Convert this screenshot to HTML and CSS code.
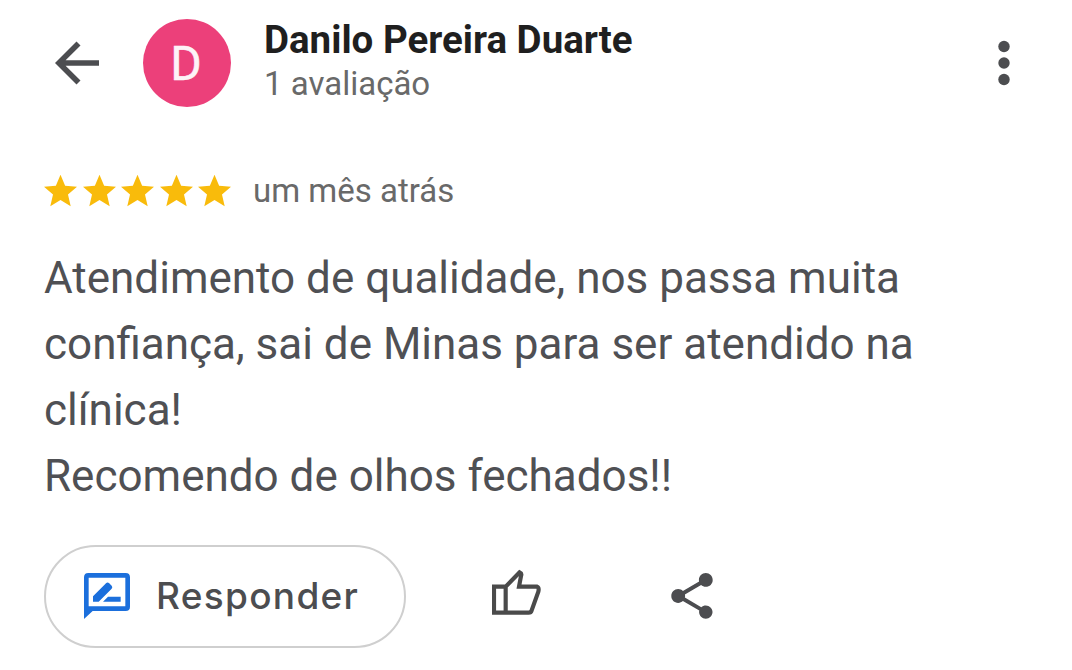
FILE: index.html
```html
<!DOCTYPE html>
<html lang="pt-BR">
<head>
<meta charset="utf-8">
<title>Avaliação</title>
<link rel="stylesheet" href="styles.css">
</head>
<body>
<main class="review">
  <header class="header">
    <svg class="back" viewBox="0 0 44 44"><path d="M44 19.300H10.600L25.500 4.500 21.500 .6 0 22l21.500 21.400 4-3.900L10.600 24.700H44z"/></svg>
    <div class="avatar"><span>D</span></div>
    <div class="author">
      <h1 class="name">Danilo Pereira Duarte</h1>
      <p class="count">1 avaliação</p>
    </div>
    <svg class="more" viewBox="0 0 12 46"><circle cx="6" cy="6.500" r="5.700"/><circle cx="6" cy="23" r="5.700"/><circle cx="6" cy="39.500" r="5.700"/></svg>
  </header>
  <div class="rating">
    <div class="stars">
      <svg viewBox="2 2 20 19"><path d="M12 17.270 18.180 21l-1.640-7.030L22 9.240l-7.190-.61L12 2 9.190 8.630 2 9.240l5.460 4.730L5.820 21z"/></svg>
      <svg viewBox="2 2 20 19"><path d="M12 17.270 18.180 21l-1.640-7.030L22 9.240l-7.190-.61L12 2 9.190 8.630 2 9.240l5.460 4.730L5.820 21z"/></svg>
      <svg viewBox="2 2 20 19"><path d="M12 17.270 18.180 21l-1.640-7.030L22 9.240l-7.190-.61L12 2 9.190 8.630 2 9.240l5.460 4.730L5.820 21z"/></svg>
      <svg viewBox="2 2 20 19"><path d="M12 17.270 18.180 21l-1.640-7.030L22 9.240l-7.190-.61L12 2 9.190 8.630 2 9.240l5.460 4.730L5.820 21z"/></svg>
      <svg viewBox="2 2 20 19"><path d="M12 17.270 18.180 21l-1.640-7.030L22 9.240l-7.190-.61L12 2 9.190 8.630 2 9.240l5.460 4.730L5.820 21z"/></svg>
    </div>
    <span class="date">um mês atrás</span>
  </div>
  <p class="text">Atendimento de qualidade, nos passa muita<br>confiança, sai de Minas para ser atendido na<br>clínica!<br>Recomendo de olhos fechados!!</p>
  <div class="actions">
    <button class="reply">
      <svg class="reply-icon" viewBox="0 0 138 138"><path fill-rule="evenodd" d="M13 0H125Q138 0 138 13V101Q138 114 125 114H26L0 138V13Q0 0 13 0ZM14 14V100H124V14ZM27 86V70L66 31Q70 26 75 30L83 38Q87 42 83 47L44 86ZM57 86L72 71H110V86Z"/></svg>
      <span>Responder</span>
    </button>
    <svg class="like" viewBox="0 0 147 138"><path d="M6 53H41V131H6ZM41 53L83 10Q90 13 87 21L81 53H135Q142 56 139 68L119 124Q117 131 110 131H41"/></svg>
    <svg class="share" viewBox="3 2 18 20"><path d="M18 16.080c-.76 0-1.440.3-1.960.77L8.910 12.700c.05-.23.09-.46.09-.7s-.04-.47-.09-.7l7.050-4.110c.54.5 1.250.81 2.040.81 1.660 0 3-1.340 3-3s-1.340-3-3-3-3 1.340-3 3c0 .24.04.47.09.7L8.040 9.810C7.500 9.310 6.790 9 6 9c-1.660 0-3 1.340-3 3s1.340 3 3 3c.79 0 1.500-.31 2.040-.81l7.120 4.160c-.05.21-.08.43-.08.65 0 1.610 1.310 2.920 2.920 2.920s2.920-1.310 2.920-2.920-1.310-2.920-2.920-2.920z"/></svg>
  </div>
</main>
</body>
</html>
```
FILE: styles.css
```css
* { box-sizing: border-box; }
body { margin: 0; background: #fff; font-family: Roboto, sans-serif; }
h1, p { margin: 0; }
svg { display: block; flex: none; fill: #4c4d50; }
.review { width: 1072px; height: 670px; padding: 18px 44px 0; overflow: hidden; }
.header { display: flex; height: 90px; align-items: center; padding-left: 11px; padding-right: 18px; }
.back { width: 44px; height: 44px; }
.avatar { width: 88px; height: 88px; margin-left: 44px; padding-right: 2px; border-radius: 50%; background: #ec407a; color: #fdf3f7; display: flex; align-items: center; justify-content: center; font-size: 48px; -webkit-text-stroke: 0.5px #fdf3f7; }
.author { margin-left: 33px; padding-bottom: 2px; flex: 1; }
.name { font-size: 38.500px; line-height: 44px; font-weight: 700; color: #1f1f1f; white-space: nowrap; }
.count { font-size: 33px; line-height: 44px; color: #696969; }
.more { width: 12px; height: 46px; }
.rating { display: flex; align-items: center; height: 44px; margin-top: 60px; }
.stars { display: flex; gap: 5.500px; padding-top: 1px; }
.stars svg { width: 33px; height: 33px; fill: #f9bb0b; }
.date { margin-left: 22px; font-size: 33px; color: #696969; }
.text { margin-top: 33px; font-size: 44px; line-height: 66px; color: #4f5054; white-space: nowrap; }
.actions { display: flex; align-items: center; margin-top: 36px; }
.reply { width: 362px; height: 103px; padding: 0 0 0 38px; border: 2px solid #cfcfcf; border-radius: 52px; background: #fff; display: flex; align-items: center; font-family: Inter, sans-serif; font-size: 37px; font-weight: 500; letter-spacing: 1.300px; color: #4c4d50; }
.reply-icon { width: 46px; height: 46px; margin-bottom: 1px; fill: #1b6fdc; }
.reply span { margin-left: 26px; padding-bottom: 3px; }
.like { width: 49px; height: 46px; margin-left: 86px; margin-bottom: 9px; fill: none; stroke: #4a4a4a; stroke-width: 12.500; }
.share { width: 42px; height: 46px; margin-left: 130px; margin-bottom: 1px; }
```
